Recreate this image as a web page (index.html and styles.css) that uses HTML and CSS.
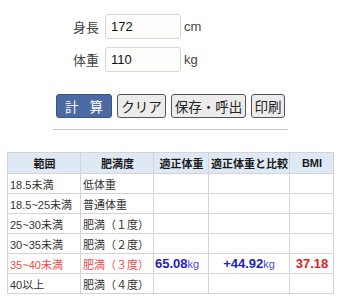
FILE: index.html
```html
<!DOCTYPE html>
<html lang="ja">
<head>
<meta charset="utf-8">
<link rel="stylesheet" href="styles.css">
</head>
<body>
<div class="form">
  <div class="row"><span class="lbl">身長</span><span class="inp">172</span><span class="unit">cm</span></div>
  <div class="row"><span class="lbl">体重</span><span class="inp">110</span><span class="unit">kg</span></div>
</div>
<div class="btns">
  <button class="btn primary">計 算</button>
  <button class="btn b2">クリア</button>
  <button class="btn b3">保存・呼出</button>
  <button class="btn b4">印刷</button>
</div>
<div class="rule"></div>
<table class="tbl">
  <colgroup><col class="c1"><col class="c2"><col class="c3"><col class="c4"><col class="c5"></colgroup>
  <thead>
    <tr><th>範囲</th><th>肥満度</th><th>適正体重</th><th>適正体重と比較</th><th>BMI</th></tr>
  </thead>
  <tbody>
    <tr><td>18.5未満</td><td>低体重</td><td></td><td></td><td></td></tr>
    <tr><td>18.5~25未満</td><td>普通体重</td><td></td><td></td><td></td></tr>
    <tr><td>25~30未満</td><td>肥満（１度）</td><td></td><td></td><td></td></tr>
    <tr><td>30~35未満</td><td>肥満（２度）</td><td></td><td></td><td></td></tr>
    <tr class="hit"><td>35~40未満</td><td>肥満（３度）</td><td class="val">65.08<span class="u">kg</span></td><td class="val c">+44.92<span class="u">kg</span></td><td class="bmi">37.18</td></tr>
    <tr><td>40以上</td><td>肥満（４度）</td><td></td><td></td><td></td></tr>
  </tbody>
</table>
</body>
</html>
```
FILE: styles.css
```css
body {
  margin: 0;
  background: #fff;
  font-family: "Liberation Sans", "Noto Sans CJK JP", sans-serif;
  color: #222;
}
.form {
  padding: 14px 0 0 73px;
  display: flex;
  flex-direction: column;
  gap: 8px;
}
.row {
  display: flex;
  align-items: center;
  height: 25px;
}
.lbl {
  font-size: 13px;
  color: #444;
  width: 32px;
}
.inp {
  box-sizing: border-box;
  width: 76px;
  height: 25px;
  border: 1px solid #d6d6d6;
  border-radius: 3px;
  background: #fdfdfc;
  font-size: 13px;
  line-height: 23px;
  padding-left: 5px;
  color: #111;
}
.unit {
  font-size: 13px;
  color: #444;
  margin-left: 3px;
}
.btns {
  margin-top: 22px;
  display: flex;
  justify-content: center;
  gap: 5px;
  padding-left: 3px;
}
.btn {
  box-sizing: border-box;
  height: 24px;
  font-family: "Noto Sans CJK JP", sans-serif;
  font-size: 13.5px;
  line-height: 20px;
  padding: 0;
  border: 1px solid #555;
  border-radius: 3px;
  background: #ececec;
  color: #222;
}
.btn.primary {
  width: 56px;
  background: #4b6aa3;
  border-color: #3b5488;
  color: #fff;
  letter-spacing: 4px;
  text-indent: 4px;
}
.b2 { width: 49px; }
.b3 { width: 75px; }
.b4 { width: 34px; }
.rule {
  margin: 11px 0 0 53px;
  width: 235px;
  height: 1px;
  background: #c8c8c8;
}
.tbl {
  margin: 22px 0 0 7px;
  border-collapse: collapse;
  table-layout: fixed;
  width: 326px;
  font-size: 11px;
}
.c1 { width: 73px; }
.c2 { width: 73px; }
.c3 { width: 55px; }
.c4 { width: 81px; }
.c5 { width: 44px; }
.tbl th, .tbl td {
  border: 1px solid #d4d4d4;
  height: 19px;
  padding: 0 1px 0 2px;
  white-space: nowrap;
  overflow: hidden;
}
.tbl th {
  height: 20px;
  background: #dfe9f6;
  font-weight: bold;
  text-align: center;
  color: #1a1a1a;
}
.tbl td { color: #333; }
.hit td { color: #ee4a4a; }
.hit td.val {
  color: #1c1cc8;
  font-weight: bold;
  font-size: 13px;
  padding: 0 1px;
}
.hit td.val.c { text-align: center; }
.hit td .u {
  font-size: 11px;
  font-weight: normal;
  color: #4a4ad8;
}
.hit td.bmi {
  color: #e02020;
  font-weight: bold;
  font-size: 13px;
  text-align: center;
}
```
